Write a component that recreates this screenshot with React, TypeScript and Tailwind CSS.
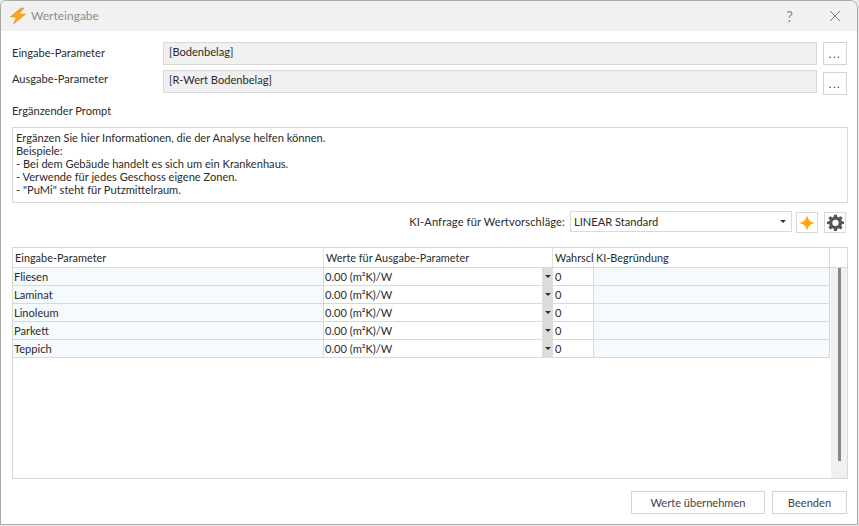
const rows = ["Fliesen", "Laminat", "Linoleum", "Parkett", "Teppich"];

function Bolt() {
  return (
    <svg width="18" height="18" viewBox="0 0 18 18" className="shrink-0">
      <path d="M11.8 1 L1.500 9.800 L7.400 10.200 L4.600 16.800 L16.500 7.200 L10 7.100 L14.800 1.200 Z" fill="#f5a623" stroke="#dd8f14" strokeWidth="0.6" />
    </svg>
  );
}

function Caret() {
  return <span className="w-0 h-0 border-x-[3px] border-x-transparent border-t-[3px] border-t-[#333]" />;
}

export default function App() {
  return (
    <div className="w-[859px] h-[526px] bg-[#e8e8e8] overflow-hidden text-[11.1px] text-[#2b2b2b] leading-[13px]" style={{ fontFamily: 'Lato, "Noto Sans", sans-serif' }}>
      <div className="w-[858px] h-[525px] bg-white border border-[#a9a9a9] rounded-tr-[8px] rounded-tl-[6px] flex flex-col overflow-hidden">
        <div className="h-[30px] shrink-0 bg-[#f1f1f1] flex items-center pl-[8px] pr-[16px]">
          <Bolt />
          <span className="ml-[4px] mb-[2px] text-[12px] text-[#8c8c8c]">Werteingabe</span>
          <span className="ml-auto text-[15px] text-[#8a8a8a] mr-[36px]">?</span>
          <svg width="12" height="12" viewBox="0 0 12 12"><path d="M1 1L11 11M11 1L1 11" stroke="#777" strokeWidth="1" /></svg>
        </div>

        <div className="flex flex-col pl-[11px] pr-[10px] flex-1 min-h-0">
          <div className="flex mt-[11px] h-[23px]">
            <span className="w-[151px] pt-[4px]">Eingabe-Parameter</span>
            <div className="w-[654px] h-[23px] bg-[#f0f0f0] border border-[#d9d9d9] px-[5px] pt-[2px]">[Bodenbelag]</div>
            <button className="ml-[6px] w-[24px] h-[23px] bg-white border border-[#d4d4d4] text-[#444] tracking-[1.5px] leading-[20px]">...</button>
          </div>
          <div className="flex mt-[5px] h-[25px]">
            <span className="w-[151px] pt-[2px]">Ausgabe-Parameter</span>
            <div className="w-[654px] h-[23px] bg-[#f0f0f0] border border-[#d9d9d9] px-[5px] pt-[2px]">[R-Wert Bodenbelag]</div>
            <button className="ml-[6px] mt-[2px] w-[24px] h-[23px] bg-white border border-[#d4d4d4] text-[#444] tracking-[1.5px] leading-[20px]">...</button>
          </div>
          <div className="mt-[9px] h-[13px]">Ergänzender Prompt</div>
          <div className="mt-[10px] w-[836px] h-[76px] border border-[#d9d9d9] px-[3px] pt-[3px]">
            <p>Ergänzen Sie hier Informationen, die der Analyse helfen können.</p>
            <p>Beispiele:</p>
            <p>- Bei dem Gebäude handelt es sich um ein Krankenhaus.</p>
            <p>- Verwende für jedes Geschoss eigene Zonen.</p>
            <p>- "PuMi" steht für Putzmittelraum.</p>
          </div>
          <div className="flex items-start justify-end h-[23px] mt-[8px] w-[836px]">
            <span className="mr-[5px] mt-[4px] tracking-[0.13px]">KI-Anfrage für Wertvorschläge:</span>
            <div className="w-[222px] h-[21px] border border-[#d9d9d9] flex items-center pl-[3px] pr-[5px]">
              <span>LINEAR Standard</span>
              <span className="ml-auto flex"><Caret /></span>
            </div>
            <button className="ml-[4px] mt-px w-[22px] h-[21px] border border-[#d9d9d9] flex items-center justify-center">
              <svg width="16" height="16" viewBox="0 0 16 16"><path d="M8 0 C8.8 4.6 11 7 16 8 C11 9 8.8 11.4 8 16 C7.2 11.4 5 9 0 8 C5 7 7.2 4.6 8 0 Z" fill="#ffa50f" /></svg>
            </button>
            <button className="ml-[6px] mr-[2px] mt-px w-[22px] h-[21px] border border-[#d9d9d9] flex items-center justify-center">
              <svg width="17" height="17" viewBox="0 0 24 24">
                <path fillRule="evenodd" fill="#555" d="M10 1h4l.6 3.2 1.9.8L19.2 3 22 5.8 20.100 8.500l.8 1.900L24 11v3l-3.100.6-.8 1.900 1.900 2.700L19.200 22l-2.700-1.900-1.900.8L14 24h-4l-.6-3.100-1.900-.8L4.800 22 2 19.200l1.900-2.700-.8-1.900L0 14v-3l3.100-.6.8-1.900L2 5.800 4.800 3l2.700 2 1.900-.8zM12 8a4.500 4.500 0 1 0 0 9 4.500 4.500 0 0 0 0-9z" />
              </svg>
            </button>
          </div>

          <div className="mt-[13px] w-[836px] h-[232px] border border-[#d9d9d9] flex flex-col">
            <div className="flex h-[20px] shrink-0 border-b border-[#d9d9d9] items-center text-[10.9px]">
              <div className="w-[311px] pl-[2px] h-full flex items-center border-r border-[#e4e4e4]">Eingabe-Parameter</div>
              <div className="w-[229px] pl-[2px] h-full flex items-center border-r border-[#e4e4e4]">Werte für Ausgabe-Parameter</div>
              <div className="w-[41px] pl-[2px] h-full flex items-center border-r border-[#e4e4e4] overflow-hidden whitespace-nowrap">Wahrscheinlichkeit</div>
              <div className="w-[236px] pl-[2px] h-full flex items-center border-r border-[#d9d9d9]">KI-Begründung</div>
            </div>
            <div className="flex flex-1 min-h-0">
              <div className="w-[817px] flex flex-col">
                {rows.map((r) => (
                  <div key={r} className="flex h-[18px] border-b border-[#d9d9d9] items-center">
                    <div className="w-[311px] h-full pl-[1px] bg-[#f5fafe] flex items-center border-r border-[#d9d9d9]">{r}</div>
                    <div className="w-[229px] h-full flex items-center pl-[1px]">
                      <span>0.00 (m²K)/W</span>
                      <span className="ml-auto w-[11px] h-[18px] bg-[#dcdcdc] flex items-center justify-center"><Caret /></span>
                    </div>
                    <div className="w-[41px] h-full pl-[2px] flex items-center border-r border-[#d9d9d9]">0</div>
                    <div className="w-[236px] h-full bg-[#f5fafe] border-r border-[#d9d9d9]" />
                  </div>
                ))}
              </div>
              <div className="w-[18px] bg-[#f0f0f0] flex justify-center pb-[17px] ml-px">
                <div className="w-[3px] h-full bg-[#868686]" />
              </div>
            </div>
          </div>

          <div className="flex justify-end mt-[12px] w-[835px]">
            <button className="w-[134px] h-[23px] border border-[#d4d4d4] text-[#444]">Werte übernehmen</button>
            <button className="ml-[7px] w-[75px] h-[23px] border border-[#d4d4d4] text-[#444]">Beenden</button>
          </div>
        </div>
      </div>
    </div>
  );
}
